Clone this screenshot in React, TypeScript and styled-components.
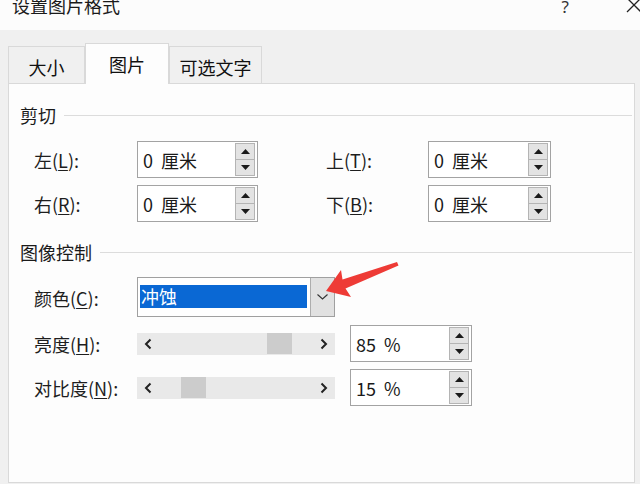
import React from "react";
import styled, { createGlobalStyle } from "styled-components";

const GlobalStyle = createGlobalStyle`
  html, body { margin: 0; padding: 0; }
  body {
    width: 640px;
    height: 484px;
    overflow: hidden;
    background: #f0f0f0;
    font-family: "Noto Sans CJK SC", "Noto Sans", sans-serif;
    color: #1c1c1c;
  }
`;

const Dialog = styled.div`
  position: relative;
  width: 640px;
  height: 484px;
  display: flex;
  flex-direction: column;
  background: #f0f0f0;
  overflow: hidden;
`;

const TitleBar = styled.div`
  flex: none;
  height: 30px;
  background: #fcfcfc;
  display: flex;
  align-items: flex-start;
  padding-left: 12px;
`;

const Title = styled.div`
  flex: 1;
  font-size: 18px;
  line-height: 18px;
  margin-top: -4px;
  color: #1a1a1a;
`;

const Help = styled.div`
  font-family: "Noto Sans", sans-serif;
  font-size: 17px;
  line-height: 17px;
  margin-top: -2px;
  color: #333;
  margin-right: 56px;
`;

const CloseIcon = styled.svg`
  margin-top: -3px;
  margin-right: -3px;
  flex: none;
`;

const TabStrip = styled.div`
  flex: none;
  height: 53px;
  display: flex;
  align-items: flex-end;
  padding-left: 8px;
`;

const Tab = styled.div<{ $active?: boolean; $w: number }>`
  box-sizing: border-box;
  position: relative;
  z-index: ${(p) => (p.$active ? 2 : 1)};
  width: ${(p) => p.$w}px;
  height: ${(p) => (p.$active ? 41 : 37)}px;
  margin-bottom: ${(p) => (p.$active ? -1 : 0)}px;
  border: 1px solid #d9d9d9;
  border-bottom: none;
  background: ${(p) => (p.$active ? "#fdfdfd" : "#f0f0f0")};
  display: flex;
  align-items: center;
  justify-content: center;
  padding-top: ${(p) => (p.$active ? 0 : 4)}px;
  font-size: 18px;
  color: #111;
`;

const Panel = styled.div`
  flex: 1;
  margin: 0 5px 1px 8px;
  background: #fdfdfd;
  border: 1px solid #d9d9d9;
  display: flex;
  flex-direction: column;
  padding-top: 19px;
`;

const SectionHeader = styled.div<{ $mt?: number }>`
  display: flex;
  align-items: center;
  height: 24px;
  gap: 8px;
  padding-left: 11px;
  margin-top: ${(p) => p.$mt ?? 0}px;
  margin-right: 2px;
  font-size: 18px;
  color: #1a1a1a;
`;

const Rule = styled.div`
  flex: 1;
  height: 1px;
  background: #dcdcdc;
`;

const CropGrid = styled.div`
  display: grid;
  grid-template-columns: 103px 189px 102px 122px;
  grid-auto-rows: 37px;
  row-gap: 7px;
  align-items: center;
  padding-left: 25px;
  margin-top: 14px;
`;

const ControlGrid = styled.div`
  display: grid;
  grid-template-columns: 103px 213px 122px;
  grid-template-rows: 41px 37px 37px;
  row-gap: 7px;
  align-items: center;
  padding-left: 25px;
  margin-top: 13px;
`;

const Label = styled.div`
  font-size: 18px;
  line-height: 20px;
  color: #1e1e1e;
  white-space: nowrap;
`;

const Key = styled.span`
  text-decoration: underline;
  text-underline-offset: 2px;
  text-decoration-thickness: 1px;
`;

const SpinBox = styled.div<{ $w: number }>`
  box-sizing: border-box;
  width: ${(p) => p.$w}px;
  height: 37px;
  border: 1px solid #a3a3a3;
  background: #fff;
  display: flex;
  padding: 1px 2px 1px 0;
`;

const SpinValue = styled.div`
  flex: 1;
  display: flex;
  align-items: center;
  padding-left: 5px;
  font-size: 18px;
  word-spacing: 4px;
  color: #1a1a1a;
  white-space: pre;
`;

const SpinButtons = styled.div`
  width: 20px;
  display: flex;
  flex-direction: column;
  border: 1px solid #b4b4b4;
  box-sizing: border-box;
`;

const SpinBtn = styled.div<{ $top?: boolean }>`
  flex: 1;
  background: #e3e3e3;
  display: flex;
  align-items: center;
  justify-content: center;
  border-bottom: ${(p) => (p.$top ? "1px solid #b4b4b4" : "none")};
`;

const Combo = styled.div`
  box-sizing: border-box;
  align-self: start;
  width: 198px;
  height: 40px;
  border: 1px solid #a0a0a0;
  background: #fff;
  display: flex;
  padding-left: 2px;
`;

const Selection = styled.div`
  width: 167px;
  height: 23px;
  margin-top: 7px;
  background: #0a68d4;
  color: #fff;
  font-size: 18px;
  line-height: 23px;
  padding-left: 1px;
  box-sizing: border-box;
`;

const DropButton = styled.div`
  margin-left: auto;
  width: 23px;
  background: #e1e1e1;
  border-left: 1px solid #adadad;
  display: flex;
  align-items: center;
  justify-content: center;
`;

const Slider = styled.div`
  width: 198px;
  height: 22px;
  background: #e9e9e9;
  display: flex;
  align-items: stretch;
`;

const SliderArrow = styled.div`
  width: 22px;
  flex: none;
  display: flex;
  align-items: center;
  justify-content: center;
`;

const SliderTrack = styled.div`
  flex: 1;
  position: relative;
`;

const Thumb = styled.div`
  position: absolute;
  top: 0;
  width: 25px;
  height: 21px;
  background: #cccccc;
`;

const Overlay = styled.svg`
  position: absolute;
  left: 0;
  top: 0;
  pointer-events: none;
`;

const UpTri = () => (
  <svg width="9" height="5" viewBox="0 0 9 5">
    <polygon points="0,5 4.5,0 9,5" fill="#1a1a1a" />
  </svg>
);
const DownTri = () => (
  <svg width="9" height="5" viewBox="0 0 9 5">
    <polygon points="0,0 4.5,5 9,0" fill="#1a1a1a" />
  </svg>
);

const Spin = ({ value, w }: { value: string; w: number }) => (
  <SpinBox $w={w}>
    <SpinValue>{value}</SpinValue>
    <SpinButtons>
      <SpinBtn $top>
        <UpTri />
      </SpinBtn>
      <SpinBtn>
        <DownTri />
      </SpinBtn>
    </SpinButtons>
  </SpinBox>
);

const Chevron = ({ dir }: { dir: "left" | "right" }) => (
  <svg width="8" height="12" viewBox="0 0 8 12">
    <polyline
      points={dir === "left" ? "6.5,1.5 2,6 6.5,10.5" : "1.5,1.5 6,6 1.5,10.5"}
      fill="none"
      stroke="#222"
      strokeWidth="2"
    />
  </svg>
);

const SliderCtl = ({ offset }: { offset: number }) => (
  <Slider>
    <SliderArrow>
      <Chevron dir="left" />
    </SliderArrow>
    <SliderTrack>
      <Thumb style={{ left: offset }} />
    </SliderTrack>
    <SliderArrow>
      <Chevron dir="right" />
    </SliderArrow>
  </Slider>
);

export default function App() {
  return (
    <>
      <GlobalStyle />
      <Dialog>
        <TitleBar>
          <Title>设置图片格式</Title>
          <Help>?</Help>
          <CloseIcon width="18" height="18" viewBox="0 0 18 18">
            <line x1="2" y1="1" x2="16" y2="15" stroke="#222" strokeWidth="1.3" />
            <line x1="16" y1="1" x2="2" y2="15" stroke="#222" strokeWidth="1.3" />
          </CloseIcon>
        </TitleBar>
        <TabStrip>
          <Tab $w={77}>大小</Tab>
          <Tab $w={84} $active>
            图片
          </Tab>
          <Tab $w={93}>可选文字</Tab>
        </TabStrip>
        <Panel>
          <SectionHeader>
            剪切
            <Rule />
          </SectionHeader>
          <CropGrid>
            <Label>
              左(<Key>L</Key>):
            </Label>
            <Spin value="0 厘米" w={121} />
            <Label>
              上(<Key>T</Key>):
            </Label>
            <Spin value="0 厘米" w={123} />
            <Label>
              右(<Key>R</Key>):
            </Label>
            <Spin value="0 厘米" w={121} />
            <Label>
              下(<Key>B</Key>):
            </Label>
            <Spin value="0 厘米" w={123} />
          </CropGrid>
          <SectionHeader $mt={18}>
            图像控制
            <Rule />
          </SectionHeader>
          <ControlGrid>
            <Label>
              颜色(<Key>C</Key>):
            </Label>
            <Combo>
              <Selection>冲蚀</Selection>
              <DropButton>
                <svg width="11" height="6" viewBox="0 0 11 6">
                  <polyline points="0.5,0.5 5.5,5 10.5,0.5" fill="none" stroke="#333" strokeWidth="1.1" />
                </svg>
              </DropButton>
            </Combo>
            <span />
            <Label>
              亮度(<Key>H</Key>):
            </Label>
            <SliderCtl offset={108} />
            <Spin value="85 %" w={122} />
            <Label>
              对比度(<Key>N</Key>):
            </Label>
            <SliderCtl offset={22} />
            <Spin value="15 %" w={122} />
          </ControlGrid>
        </Panel>
        <Overlay width="640" height="484" viewBox="0 0 640 484">
          <polygon
            points="326,291 341,270 342.5,279.5 397,262 398.5,265.5 345.5,288.5 351,297"
            fill="#ee3b36"
          />
        </Overlay>
      </Dialog>
    </>
  );
}
